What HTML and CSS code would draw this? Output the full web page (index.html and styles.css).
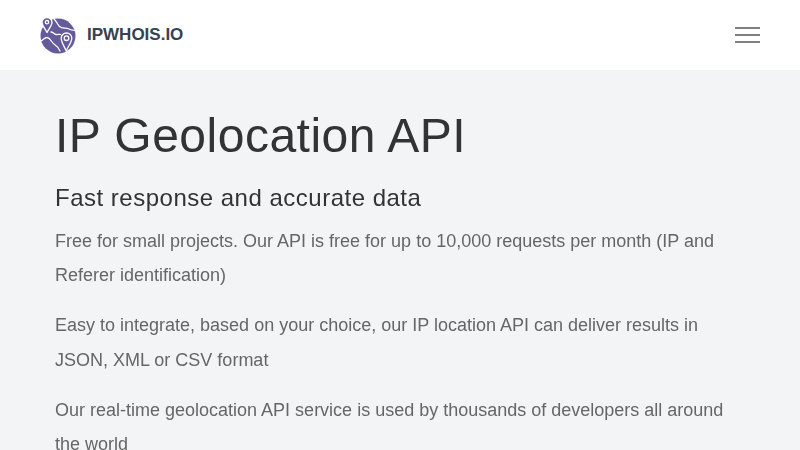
FILE: index.html
```html
<!DOCTYPE html>
<html lang="en">
<head>
<meta charset="utf-8">
<title>IP Geolocation API</title>
<link rel="stylesheet" href="styles.css">
</head>
<body>
<header class="topbar">
  <a class="brand" href="#">
    <svg class="logo" viewBox="0 0 36 36" width="36" height="36" aria-hidden="true">
      <circle cx="18" cy="18" r="17.500" fill="#655a9c"/>
      <g fill="none" stroke="#fff" stroke-width="1.300" stroke-linecap="round" stroke-linejoin="round">
        <path d="M7 -0.500c2.800 0 5 2.200 5 4.800 0 3.400-3.300 6.500-5 10.200-1.700-3.700-5-6.800-5-10.200 0-2.600 2.200-4.800 5-4.800z" fill="#655a9c"/>
        <circle cx="7" cy="4.200" r="1.700"/>
        <path d="M26.500 15c3 0 5.300 2.300 5.300 5.200 0 3.800-3.600 8-5.600 12.800-2-4.800-5-9-5-12.800 0-2.900 2.300-5.200 5.300-5.200z" fill="#655a9c"/>
        <circle cx="26.500" cy="20.200" r="2.300"/>
        <path d="M14 1c2.500 2 3 5 5.500 7.500 3 2.800 6.500.500 9.500 2.500 2 1.300 4 1.300 6 1.300"/>
        <path d="M1 23c2-1 3.500-3.500 6-3.500 3.500 0 4 4.500 7 6.500 2.500 1.700 4.500 3.500 6 7"/>
        <path d="M11 14c2 0 3 2 5 2.500 1.500.400 3-.500 4.500 0"/>
      </g>
    </svg>
    <span class="brand-name">IPWHOIS.IO</span>
  </a>
  <button class="menu" type="button" aria-label="Menu">
    <span class="menu-line"></span>
    <span class="menu-line"></span>
    <span class="menu-line"></span>
  </button>
</header>
<main class="content">
  <h1 class="title">IP Geolocation API</h1>
  <h2 class="subtitle">Fast response and accurate data</h2>
  <p class="text">Free for small projects. Our API is free for up to 10,000 requests per month (IP and Referer identification)</p>
  <p class="text">Easy to integrate, based on your choice, our IP location API can deliver results in JSON, XML or CSV format</p>
  <p class="text">Our real-time geolocation API service is used by thousands of developers all around the world</p>
</main>
</body>
</html>
```
FILE: styles.css
```css
* { box-sizing: border-box; }
html, body { margin: 0; padding: 0; }
body {
  height: 450px;
  overflow: hidden;
  background: #f3f4f6;
  font-family: "Liberation Sans", Arial, sans-serif;
}
.topbar {
  height: 70px;
  background: #fff;
  display: flex;
  align-items: center;
  justify-content: space-between;
  padding: 0 40px;
}
.brand {
  display: flex;
  align-items: center;
  gap: 11px;
  text-decoration: none;
}
.logo { display: block; margin-top: 1px; }
.brand-name {
  font-size: 17px;
  font-weight: 700;
  color: #374151;
}
.menu {
  display: flex;
  flex-direction: column;
  gap: 5px;
  width: 25px;
  padding: 0;
  border: 0;
  background: none;
}
.menu-line {
  display: block;
  height: 2px;
  width: 25px;
  background: #808080;
}
.content { padding: 33px 55px 0; will-change: transform; }
.title {
  margin: 0;
  font-size: 48px;
  line-height: 66px;
  font-weight: 400;
  color: #333;
  letter-spacing: 0.5px;
}
.subtitle {
  margin: 14px 0 0;
  font-size: 24px;
  line-height: 30px;
  font-weight: 400;
  color: #333;
  letter-spacing: 0.5px;
}
.text {
  margin: 11px 0 16px;
  font-size: 18px;
  line-height: 34.200px;
  color: #666;
}
.text + .text { margin-top: 0; }
```
